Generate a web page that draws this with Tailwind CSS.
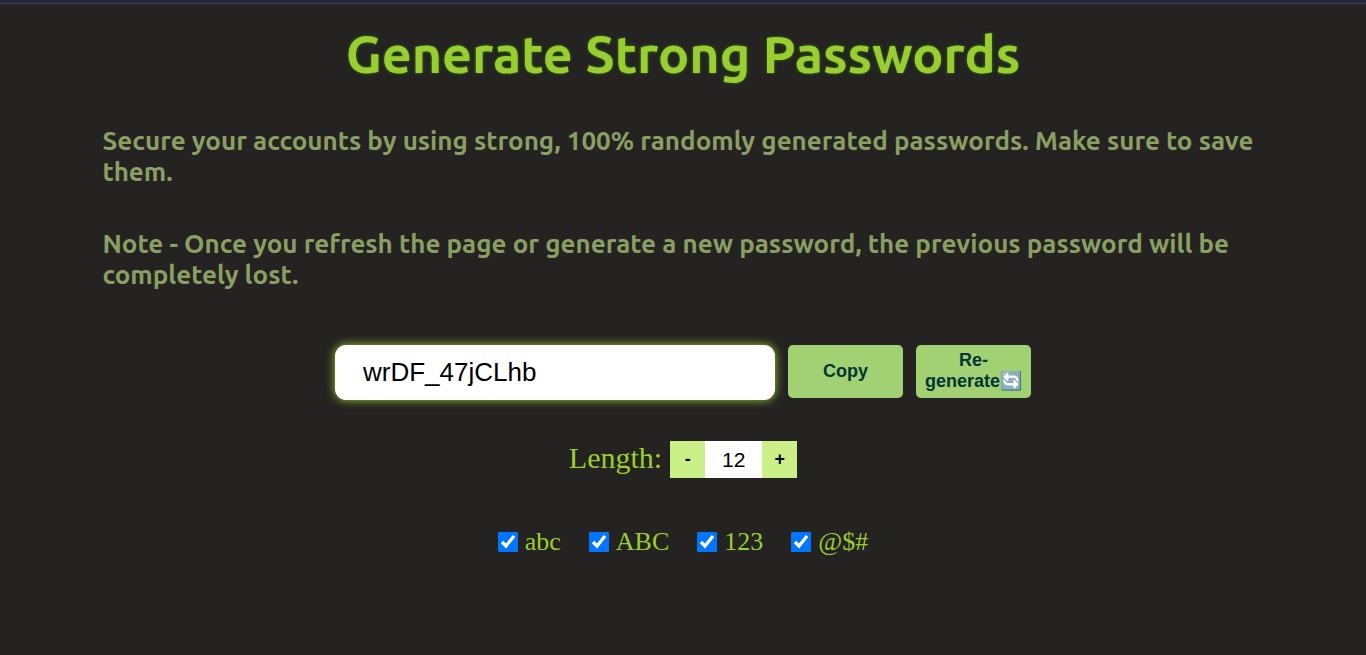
<!DOCTYPE html>
<html lang="en">
<head>
<meta charset="utf-8">
<meta name="viewport" content="width=device-width, initial-scale=1">
<title>Generate Strong Passwords</title>
<script src="https://cdn.jsdelivr.net/npm/@tailwindcss/browser@4"></script>
</head>
<body class="min-h-screen bg-[#242321] font-['Liberation_Serif',serif] text-[yellowgreen]">
<header class="h-1 border-b border-[#41435f] bg-[#24283b]"></header>
<main class="flex flex-col items-center">
  <h1 class="mt-[15px] text-center font-['Ubuntu','Noto_Sans',sans-serif] text-[52px] leading-[70px] font-semibold [text-shadow:0_0_3px_#338a0b]">Generate Strong Passwords</h1>
  <div class="mt-9 flex w-[85%] flex-col gap-[41px] font-['Ubuntu','Noto_Sans',sans-serif] text-[26px] leading-[31px] font-semibold text-[#8a9f62]">
    <p>Secure your accounts by using strong, 100% randomly generated passwords. Make sure to save them.</p>
    <p>Note - Once you refresh the page or generate a new password, the previous password will be completely lost.</p>
  </div>
  <div class="mt-[55px] flex items-start gap-[13px] font-['Liberation_Sans',sans-serif]">
    <input type="text" aria-label="Password" value="wrDF_47jCLhb" class="h-[55px] w-[440px] rounded-[11px] bg-white px-7 text-[26px] text-black shadow-[0_0_10px_yellowgreen] outline-none">
    <button type="button" class="h-[53px] w-[115px] rounded-[5px] bg-[#a2d174] text-lg leading-[21px] font-bold text-[#023535]">Copy</button>
    <button type="button" class="h-[53px] w-[115px] rounded-[5px] bg-[#a2d174] pb-0.5 text-lg leading-[21px] font-bold text-[#023535]">Re-<br>generate🔄</button>
  </div>
  <div class="mt-[41px] flex items-center">
    <label for="length" class="mr-2 pb-1 text-[30px] leading-8">Length:</label>
    <div class="flex h-[37px] font-['Liberation_Sans',sans-serif] text-black">
      <button type="button" aria-label="Decrease length" class="w-[35px] bg-[#ccf088] pb-0.5 text-lg font-bold">-</button>
      <input id="length" type="text" inputmode="numeric" value="12" class="w-[57px] bg-white text-center text-[21px] outline-none">
      <button type="button" aria-label="Increase length" class="w-[35px] bg-[#ccf088] pb-0.5 text-lg font-bold">+</button>
    </div>
  </div>
  <div class="mt-12 flex gap-7 text-[26px] leading-8">
    <label class="flex items-center gap-[7px]"><input type="checkbox" checked class="size-5">abc</label>
    <label class="flex items-center gap-[7px]"><input type="checkbox" checked class="size-5">ABC</label>
    <label class="flex items-center gap-[7px]"><input type="checkbox" checked class="size-5">123</label>
    <label class="flex items-center gap-[7px]"><input type="checkbox" checked class="size-5">@$#</label>
  </div>
</main>
</body>
</html>
